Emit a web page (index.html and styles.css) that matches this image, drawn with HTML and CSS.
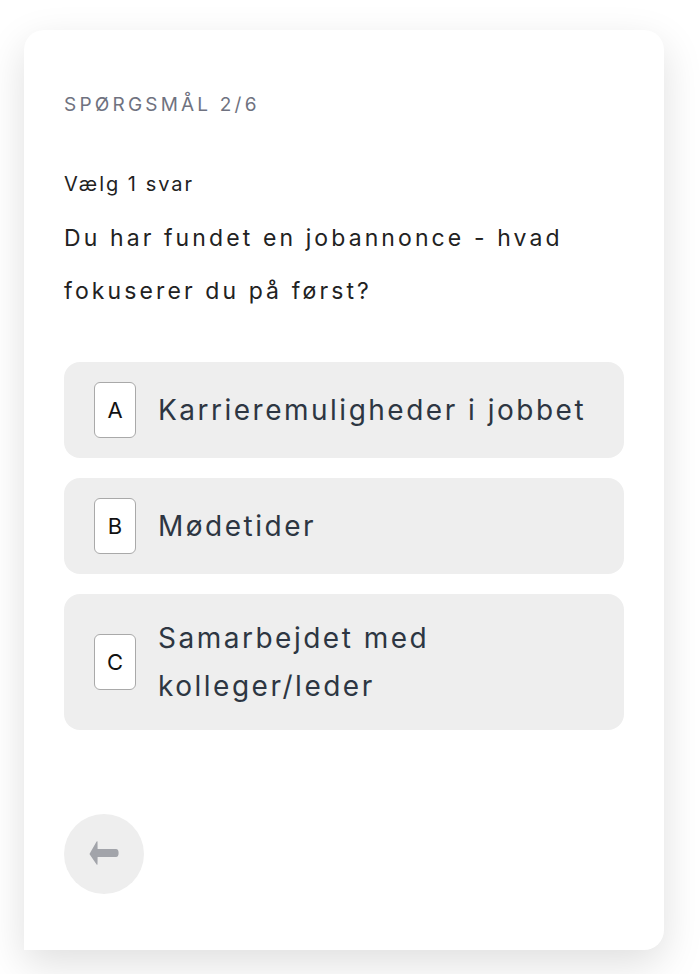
FILE: index.html
```html
<!DOCTYPE html>
<html lang="da">
<head>
<meta charset="utf-8">
<title>Spørgsmål 2/6</title>
<link rel="stylesheet" href="styles.css">
</head>
<body>
<main class="card">
  <div class="counter">Spørgsmål 2/6</div>
  <div class="hint">Vælg 1 svar</div>
  <h1 class="question">Du har fundet en jobannonce - hvad fokuserer du på først?</h1>
  <ul class="options">
    <li class="option"><span class="key">A</span><span class="label">Karrieremuligheder i jobbet</span></li>
    <li class="option"><span class="key">B</span><span class="label">Mødetider</span></li>
    <li class="option"><span class="key">C</span><span class="label">Samarbejdet med kolleger/leder</span></li>
  </ul>
  <button class="back" type="button" aria-label="Tilbage">
    <svg width="30" height="24" viewBox="0 0 30 24" aria-hidden="true">
      <path d="M0.6 12.8 L7.6 0.6 Q8 0 8.5 0.4 L8.6 8 L27 8 Q29.6 8.2 29.6 12 Q29.6 15.8 27 16 L8.6 16 L8.5 23.6 Q8 24 7.6 23.4 L0.6 13.2 Z" fill="#a2a4aa"/>
    </svg>
  </button>
</main>
</body>
</html>
```
FILE: styles.css
```css
html, body {
  margin: 0;
  padding: 0;
  background: #ffffff;
}
body {
  padding: 30px 36px 24px 24px;
  font-family: Inter, "DejaVu Sans", sans-serif;
  color: #222a33;
}
.card {
  background: #ffffff;
  border-radius: 20px 20px 20px 0;
  box-shadow: 0 14px 40px rgba(0, 0, 0, 0.13);
  height: 920px;
  box-sizing: border-box;
  padding: 40px 40px 56px 40px;
  display: flex;
  flex-direction: column;
}
.counter {
  margin-top: 23px;
  font-size: 19px;
  line-height: 24px;
  text-transform: uppercase;
  letter-spacing: 3.2px;
  color: #6f7280;
}
.hint {
  margin-top: 53px;
  font-size: 20px;
  line-height: 28px;
  color: #222;
  letter-spacing: 2px;
}
.question {
  margin: 14px 0 0 0;
  font-size: 23px;
  font-weight: 400;
  line-height: 53px;
  color: #222;
  letter-spacing: 3.1px;
}
.options {
  list-style: none;
  margin: 44px 0 0 0;
  padding: 0;
  display: flex;
  flex-direction: column;
  gap: 20px;
}
.option {
  background: #eeeeee;
  border-radius: 16px;
  padding: 20px 30px;
  display: flex;
  align-items: center;
  gap: 22px;
}
.key {
  flex: none;
  width: 42px;
  height: 56px;
  box-sizing: border-box;
  border: 1.5px solid #a9a9a9;
  border-radius: 6px;
  background: #fff;
  display: flex;
  align-items: center;
  justify-content: center;
  font-size: 22px;
  color: #111;
}
.label {
  font-size: 28px;
  line-height: 48px;
  color: #2d3642;
  letter-spacing: 2.5px;
}
.back {
  margin-top: auto;
  width: 80px;
  height: 80px;
  border: none;
  border-radius: 50%;
  background: #eeeeee;
  display: flex;
  align-items: center;
  justify-content: center;
  padding: 0 0 2px 0;
  cursor: pointer;
}
```
